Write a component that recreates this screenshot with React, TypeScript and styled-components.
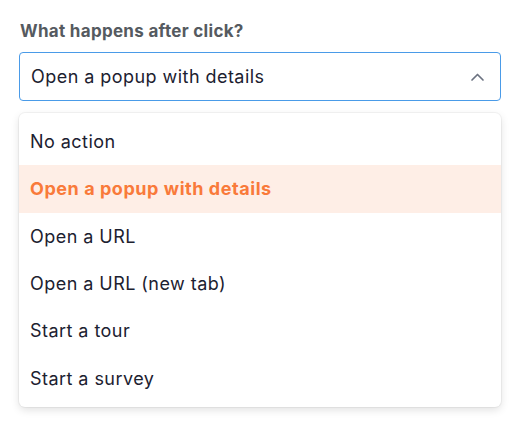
import React from "react";
import styled, { createGlobalStyle } from "styled-components";

const Global = createGlobalStyle`
  html, body { margin: 0; padding: 0; background: #ffffff; }
  body { font-family: "Inter", "Liberation Sans", sans-serif; -webkit-font-smoothing: antialiased; }
`;

const Page = styled.div`
  width: 522px;
  height: 439px;
  box-sizing: border-box;
  padding: 21px 21px 0 19px;
  display: flex;
  flex-direction: column;
`;

const Label = styled.div`
  font-size: 17px;
  font-weight: 700;
  letter-spacing: 0.3px;
  color: #555a60;
  line-height: 21px;
  padding-left: 1px;
  margin-bottom: 10px;
`;

const Select = styled.div`
  height: 49px;
  box-sizing: border-box;
  border: 1px solid #4a9be8;
  border-radius: 4px;
  display: flex;
  align-items: center;
  justify-content: space-between;
  padding: 0 15px 0 11px;
  font-size: 18px;
  letter-spacing: 0.45px;
  color: #1c2130;
`;

const Menu = styled.ul`
  list-style: none;
  margin: 12px 0 0;
  padding: 5px 0;
  border-radius: 6px;
  background: #fff;
  box-shadow: 0 0 0 1px rgba(0, 0, 0, 0.04), 0 3px 8px rgba(0, 0, 0, 0.12);
`;

const Item = styled.li<{ $active?: boolean }>`
  height: 47.3px;
  display: flex;
  align-items: center;
  padding: 0 11px;
  font-size: 18px;
  letter-spacing: ${(p) => (p.$active ? "0.55px" : "0.45px")};
  font-weight: ${(p) => (p.$active ? 700 : 400)};
  color: ${(p) => (p.$active ? "#f97a3a" : "#1c2130")};
  background: ${(p) => (p.$active ? "#feeee6" : "transparent")};
`;

const Chevron = () => (
  <svg width="15" height="10" viewBox="0 0 15 10" fill="none">
    <path d="M2 8L7.5 2.5 13 8" stroke="#6b7280" strokeWidth="1.7" strokeLinecap="round" strokeLinejoin="round" />
  </svg>
);

const options = [
  "No action",
  "Open a popup with details",
  "Open a URL",
  "Open a URL (new tab)",
  "Start a tour",
  "Start a survey",
];

export default function App() {
  const selected = "Open a popup with details";
  return (
    <Page>
      <Global />
      <Label>What happens after click?</Label>
      <Select>
        <span>{selected}</span>
        <Chevron />
      </Select>
      <Menu>
        {options.map((o) => (
          <Item key={o} $active={o === selected}>
            {o}
          </Item>
        ))}
      </Menu>
    </Page>
  );
}
